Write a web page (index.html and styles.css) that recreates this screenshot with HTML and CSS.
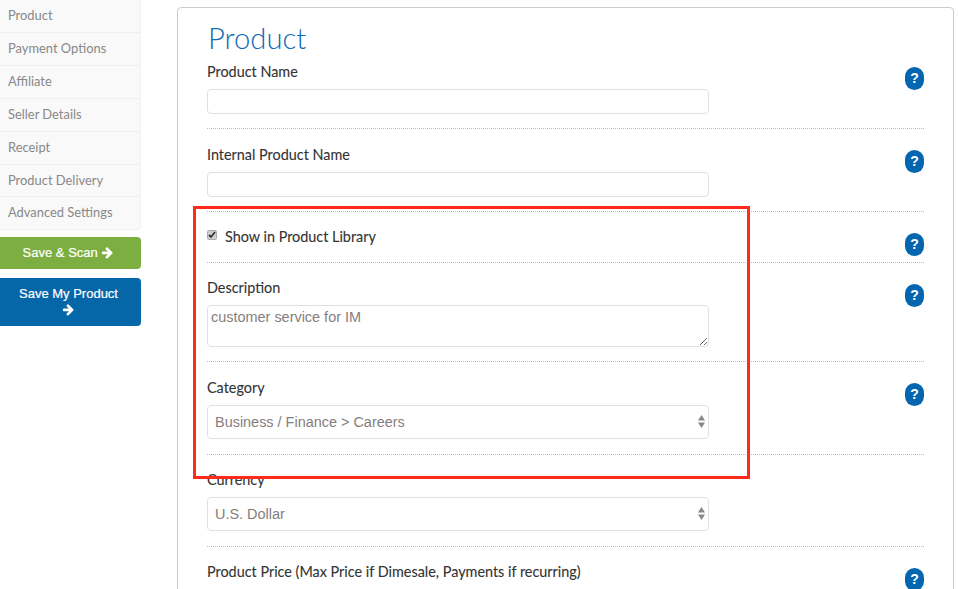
FILE: index.html
```html
<!DOCTYPE html>
<html lang="en">
<head>
<meta charset="utf-8">
<title>Product</title>
<link rel="stylesheet" href="styles.css">
</head>
<body>
<div class="page">
  <aside class="sidebar">
    <ul class="nav">
      <li>Product</li>
      <li>Payment Options</li>
      <li>Affiliate</li>
      <li>Seller Details</li>
      <li>Receipt</li>
      <li class="short">Product Delivery</li>
      <li class="short">Advanced Settings</li>
    </ul>
    <button class="btn btn-green">Save &amp; Scan <svg class="arrow" viewBox="0 0 1792 1792"><path d="M1600 960q0 54-37 91l-651 651q-39 37-91 37-51 0-90-37l-75-75q-38-38-38-91t38-91l293-293h-704q-52 0-84.500-37.500t-32.500-90.500v-128q0-53 32.500-90.500t84.500-37.500h704l-293-294q-38-36-38-90t38-90l75-75q38-38 90-38 53 0 91 38l651 651q37 35 37 90z"/></svg></button>
    <button class="btn btn-blue">Save My Product <svg class="arrow" viewBox="0 0 1792 1792"><path d="M1600 960q0 54-37 91l-651 651q-39 37-91 37-51 0-90-37l-75-75q-38-38-38-91t38-91l293-293h-704q-52 0-84.500-37.500t-32.500-90.500v-128q0-53 32.500-90.500t84.500-37.500h704l-293-294q-38-36-38-90t38-90l75-75q38-38 90-38 53 0 91 38l651 651q37 35 37 90z"/></svg></button>
  </aside>
  <main class="panel">
    <h1 class="title">Product</h1>

    <section class="row">
      <div class="field">
        <label class="label">Product Name</label>
        <input class="control input" type="text">
      </div>
      <span class="help">?</span>
    </section>

    <section class="row">
      <div class="field">
        <label class="label">Internal Product Name</label>
        <input class="control input" type="text">
      </div>
      <span class="help">?</span>
    </section>

    <section class="row">
      <div class="field">
        <label class="check-label"><input class="check" type="checkbox" checked>Show in Product Library</label>
      </div>
      <span class="help">?</span>
    </section>

    <section class="row">
      <div class="field">
        <label class="label tight">Description</label>
        <textarea class="control area">customer service for IM</textarea>
      </div>
      <span class="help">?</span>
    </section>

    <section class="row roomy">
      <div class="field">
        <label class="label">Category</label>
        <div class="select-wrap">
          <select class="control select"><option>Business / Finance &gt; Careers</option></select>
          <svg class="updown" viewBox="0 0 7 13"><path d="M3.500 0 7 5.500H0zM0 7.500H7L3.500 13z"/></svg>
        </div>
      </div>
      <span class="help">?</span>
    </section>

    <section class="row roomy">
      <div class="field">
        <label class="label tight">Currency</label>
        <div class="select-wrap">
          <select class="control select"><option>U.S. Dollar</option></select>
          <svg class="updown" viewBox="0 0 7 13"><path d="M3.500 0 7 5.500H0zM0 7.500H7L3.500 13z"/></svg>
        </div>
      </div>
    </section>

    <section class="row">
      <div class="field wide">
        <label class="label tight">Product Price (Max Price if Dimesale, Payments if recurring)</label>
      </div>
      <span class="help">?</span>
    </section>

    <div class="highlight"></div>
  </main>
</div>
</body>
</html>
```

FILE: styles.css
```css
html, body {
  margin: 0;
  height: 589px;
  overflow: hidden;
  background: #fff;
}

.page {
  display: flex;
  align-items: flex-start;
  font-family: Lato, "Liberation Sans", sans-serif;
}

/* Sidebar */
.sidebar {
  width: 141px;
  flex: none;
  margin-right: 36px;
}

.nav {
  list-style: none;
  margin: 0;
  padding: 0;
  background: #f9f9f9;
  border-right: 1px solid #f1f1f1;
  border-bottom: 1px solid #f1f1f1;
  border-radius: 0 0 4px 0;
}

.nav li {
  height: 33px;
  box-sizing: border-box;
  padding: 0 0 2px 8px;
  display: flex;
  align-items: center;
  font-size: 12.900px;
  color: #888;
  border-bottom: 1px solid #eee;
}

.nav li.short {
  height: 32px;
}

.nav li:last-child {
  border-bottom: 0;
}

.btn {
  display: block;
  width: 100%;
  border: 0;
  margin: 0;
  border-radius: 0 4px 4px 0;
  color: #fff;
  font-family: "Liberation Sans", sans-serif;
  font-size: 13px;
  -webkit-text-stroke: 0.2px #fff;
  line-height: 16px;
  text-align: center;
}

.btn-green {
  height: 32px;
  margin-top: 7px;
  padding: 0 4px 0 0;
  background: #7cae42;
}

.btn-blue {
  height: 48px;
  margin-top: 9px;
  padding: 8px 18px 8px 14px;
  background: #0566a8;
}

.arrow {
  width: 13px;
  height: 13px;
  fill: #fff;
  vertical-align: -2px;
}

/* Panel */
.panel {
  position: relative;
  width: 777px;
  height: 640px;
  flex: none;
  box-sizing: border-box;
  margin-top: 7px;
  padding: 0 29px;
  border: 1px solid #ccc;
  border-radius: 4px;
}

.title {
  height: 38px;
  margin: 0;
  padding-left: 1px;
  font-size: 29.200px;
  font-weight: 300;
  line-height: 59px;
  color: #0f6ab4;
}

.row {
  display: flex;
  justify-content: space-between;
  align-items: flex-start;
  padding: 16px 0 14px;
  border-bottom: 1px dotted #bbb;
}

.row:last-of-type {
  border-bottom: 0;
}

.roomy {
  padding-bottom: 15px;
}

.field {
  width: 502px;
}

.wide {
  width: 640px;
}

.label {
  display: block;
  height: 20px;
  margin-bottom: 7px;
  font-size: 14.400px;
  line-height: 20px;
  color: #333;
  -webkit-text-stroke: 0.1px #333;
}

.label.tight {
  margin-top: -1px;
}

.check-label {
  display: flex;
  align-items: center;
  height: 20px;
  margin-top: -1px;
  margin-bottom: 1px;
  font-size: 14.400px;
  line-height: 20px;
  color: #333;
  -webkit-text-stroke: 0.1px #333;
}

.check {
  appearance: none;
  width: 10px;
  height: 10px;
  margin: 0 8px 4px 0;
  border-radius: 2px;
  box-shadow: inset 0 0 0 1px #aaa;
  background: #d0d0d0 url("data:image/svg+xml,%3Csvg xmlns='http://www.w3.org/2000/svg' viewBox='0 0 10 10'%3E%3Cpath d='M2 5l2 2 4-5' fill='none' stroke='%23333' stroke-width='1.800'/%3E%3C/svg%3E") center / 10px no-repeat;
}

.control {
  display: block;
  width: 100%;
  box-sizing: border-box;
  margin: 0;
  border: 1px solid #e0e0e0;
  border-radius: 4px;
  background: #fff;
  outline: 0;
  font-family: "Liberation Sans", sans-serif;
  font-size: 14.450px;
  color: #857e7e;
}

.input {
  height: 25px;
}

.area {
  height: 42px;
  padding: 3px 3px 1px;
  resize: vertical;
}

.select-wrap {
  position: relative;
}

.select {
  height: 34px;
  padding: 0 24px 0 7px;
  appearance: none;
}

.updown {
  position: absolute;
  right: 4px;
  top: 10px;
  width: 7px;
  height: 13px;
  fill: #888;
}

.help {
  flex: none;
  width: 19px;
  height: 23px;
  margin: 5px 0 -8px;
  border-radius: 10px;
  background: #0566b0;
  color: #fff;
  font-family: "Liberation Sans", sans-serif;
  font-size: 14px;
  font-weight: 700;
  line-height: 23px;
  text-align: center;
}

.highlight {
  position: absolute;
  left: 15px;
  top: 198px;
  width: 551px;
  height: 267px;
  border: 3px solid #ff2a1c;
  pointer-events: none;
}
```
